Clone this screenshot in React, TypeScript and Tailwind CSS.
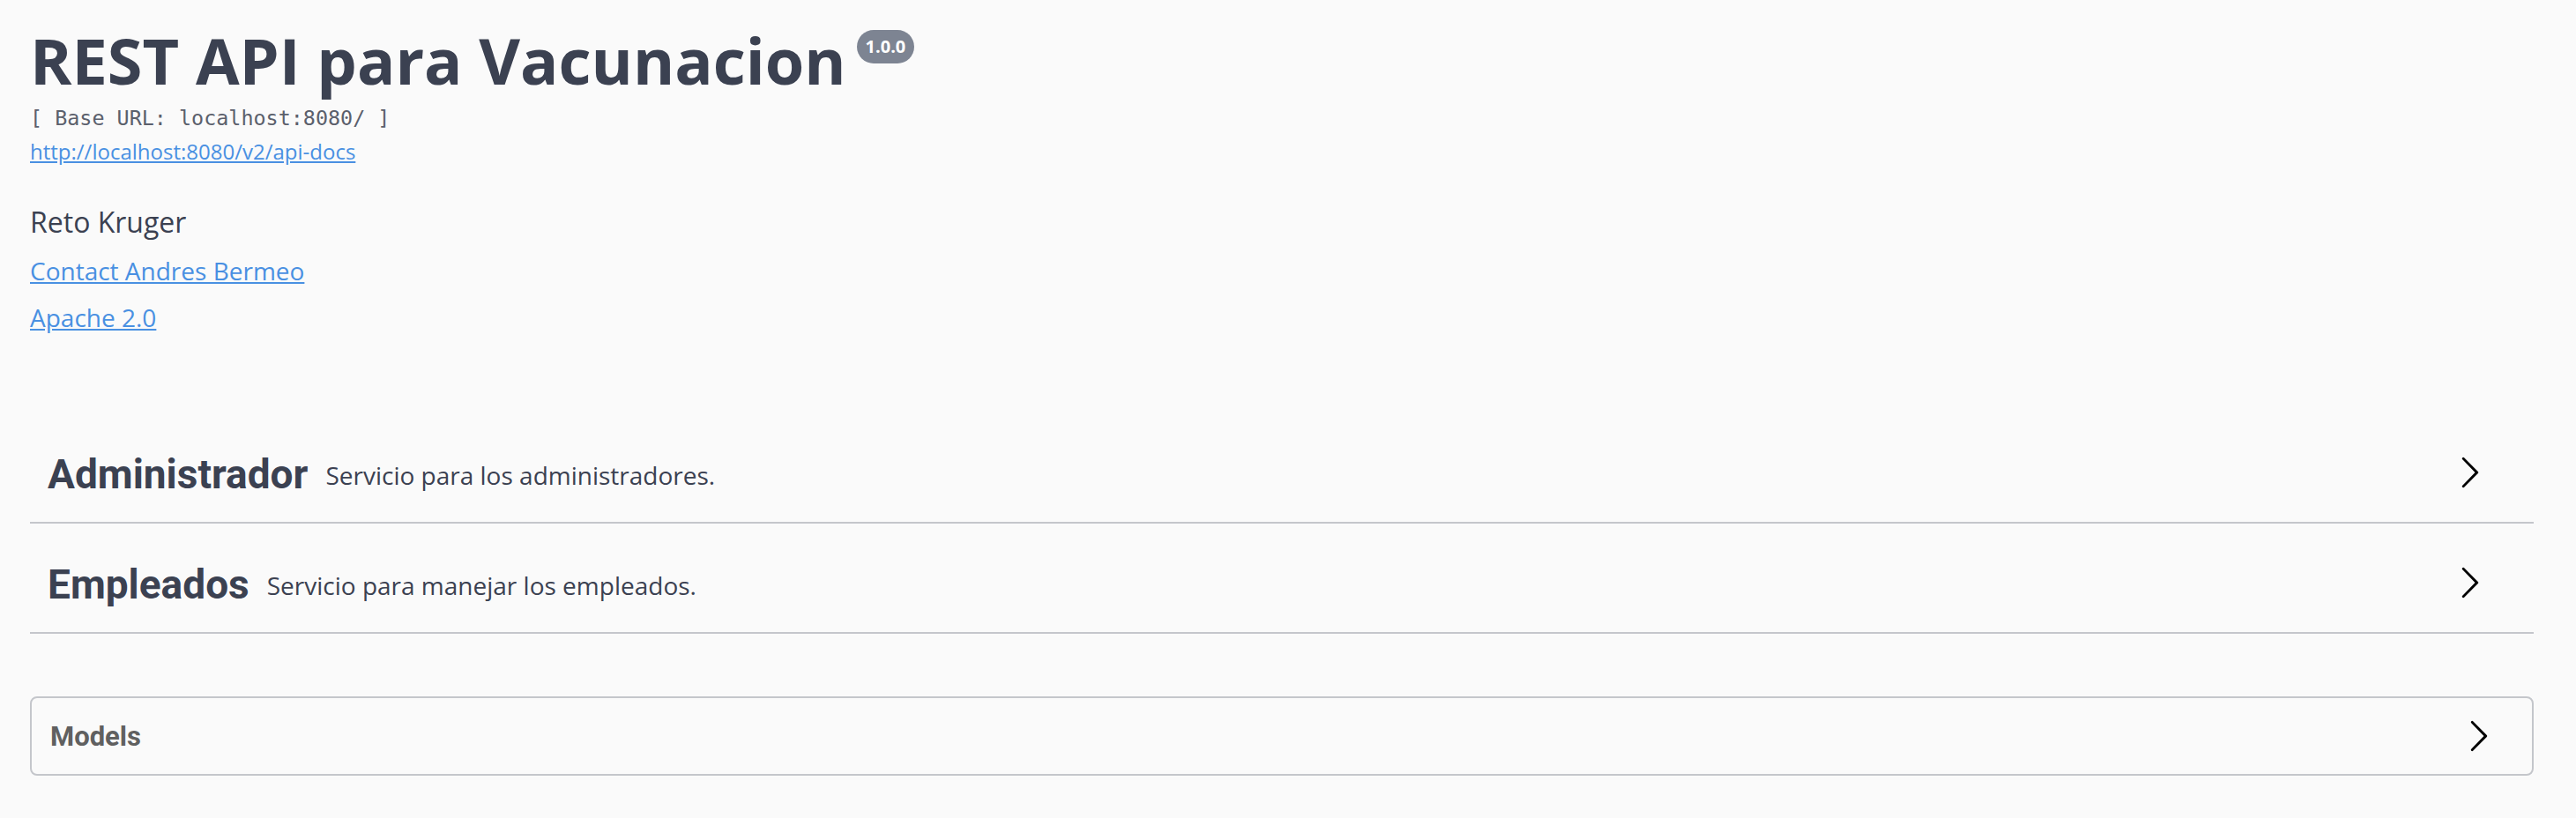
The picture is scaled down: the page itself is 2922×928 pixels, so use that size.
const Arrow = () => (
  <svg width="40" height="40" viewBox="0 0 20 20" className="shrink-0">
    <path
      fill="#000"
      d="M13.25 10L6.109 2.58a.697.697 0 0 1 0-.979.68.68 0 0 1 .969 0l7.83 7.908a.697.697 0 0 1 0 .979l-7.83 7.908a.68.68 0 0 1-.969 0 .697.697 0 0 1 0-.979L13.25 10z"
    />
  </svg>
);

const tags = [
  { name: "Administrador", desc: "Servicio para los administradores." },
  { name: "Empleados", desc: "Servicio para manejar los empleados." },
];

const App = () => {
  return (
    <div className="min-h-screen w-full bg-[#fafafa] pl-[34px] pr-[48px] font-['Open_Sans',sans-serif] text-[#3b4151]">
      {/* Info */}
      <div className="pt-[32px]">
        <div className="flex items-start">
          <h1 className="text-[72px] font-bold leading-[72px]">REST API para Vacunacion</h1>
          <span className="ml-[12px] mt-[2px] flex h-[38px] items-center rounded-full bg-[#7d8492] px-[10px] text-[20px] font-bold text-white">
            1.0.0
          </span>
        </div>
        <p className="mt-[18px] font-['DejaVu_Sans_Mono',monospace] text-[23.4px] leading-[24px] text-[#5b606c]">
          [ Base URL: localhost:8080/ ]
        </p>
        <a href="#" className="mt-[14px] block w-fit text-[24px] leading-[24px] text-[#4990e2] underline">
          http://localhost:8080/v2/api-docs
        </a>
        <p className="mt-[52px] text-[32px] leading-[32px]">Reto Kruger</p>
        <a href="#" className="mt-[25px] block w-fit text-[28px] leading-[28px] text-[#4990e2] underline">
          Contact Andres Bermeo
        </a>
        <a href="#" className="mt-[25px] block w-fit text-[28px] leading-[28px] text-[#4990e2] underline">
          Apache 2.0
        </a>
      </div>

      {/* Tags */}
      <div className="mt-[105px] flex flex-col gap-[10px]">
        {tags.map((tag) => (
          <div
            key={tag.name}
            className="flex h-[115px] items-center border-b-2 border-[#c4c6cb] pl-[20px] pr-[53px]"
          >
            <span className="pt-[4px] font-['Roboto',sans-serif] text-[46px] font-bold leading-[46px]">{tag.name}</span>
            <span className="ml-[20px] flex-1 pt-[6px] text-[28px] leading-[28px]">{tag.desc}</span>
            <Arrow />
          </div>
        ))}
      </div>

      {/* Models */}
      <div className="mt-[71px] flex h-[90px] items-center rounded-[8px] border-2 border-[#c4c6cb] pl-[21px] pr-[41px]">
        <span className="flex-1 font-['Roboto',sans-serif] text-[31px] font-bold leading-[31px] text-[#606060]">Models</span>
        <Arrow />
      </div>
    </div>
  );
};

export default App;
